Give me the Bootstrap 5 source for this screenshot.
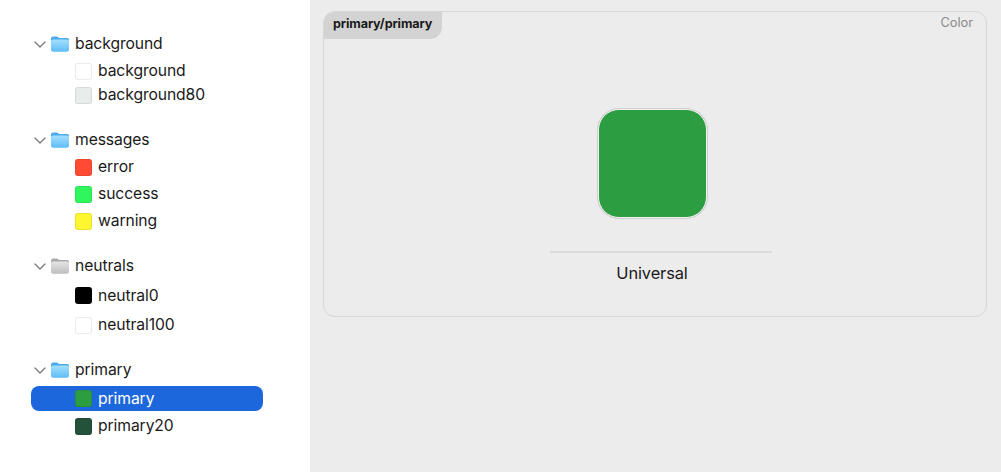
<!DOCTYPE html>
<html lang="en">
<head>
  <meta charset="UTF-8">
  <title>Colors</title>
  <link href="https://cdn.jsdelivr.net/npm/bootstrap@5.3.0/dist/css/bootstrap.min.css" rel="stylesheet">
  <style>
    html, body {
      height: 100%;
      overflow: hidden;
    }
    body {
      font-family: "Inter", "Liberation Sans", sans-serif;
      color: #1a1a1a;
      background-color: #fff;
    }
    /* sidebar */
    .side-pane {
      width: 310px;
      padding: 32px 47px 0 31px;
    }
    .tree-group {
      display: flex;
      flex-direction: column;
      margin-bottom: 21px;
    }
    .tree-group.tight { gap: 3px; }
    .tree-group.wide { gap: 5.5px; }
    .tree-row {
      display: flex;
      align-items: center;
      height: 24px;
      font-size: 15.7px;
      letter-spacing: -0.1px;
      white-space: nowrap;
    }
    .head-row { padding-left: 2px; }
    .head-row .chev { margin-right: 4px; }
    .head-row .folder { margin-right: 6px; }
    .leaf-row { padding-left: 44px; }
    .leaf-row.after-head { margin-top: 3px; }
    .leaf-row.selected {
      height: 25px;
      margin-top: 4px;
      background-color: #1d67dd;
      color: #fff;
      border-radius: 8px;
    }
    .leaf-row.after-selected { margin-top: 3px; }
    .swatch {
      width: 17px;
      height: 17px;
      border-radius: 3px;
      margin-right: 6px;
      border: 1px solid rgba(0, 0, 0, 0.08);
      flex: none;
    }
    /* main */
    .main-pane {
      background-color: #ececec;
      padding: 11px 14px 0 13px;
    }
    .color-card {
      height: 306px;
      border: 1px solid #d6d6d6;
      border-radius: 12px;
      overflow: hidden;
    }
    .name-tab {
      width: 118px;
      height: 27px;
      padding-left: 9px;
      background-color: #d3d3d3;
      border-bottom-right-radius: 12px;
      font-size: 12.6px;
      font-weight: 700;
      line-height: 23px;
      letter-spacing: -0.1px;
      white-space: nowrap;
    }
    .kind-label {
      font-size: 12.8px;
      color: #8a8a8a;
      padding: 3px 13px 0 0;
      line-height: 16px;
    }
    .big-area {
      padding-right: 6px;
    }
    .big-swatch {
      width: 109px;
      height: 109px;
      margin-top: 70px;
      background-color: #2c9d40;
      border: 1px solid #f2f2f2;
      border-radius: 21px;
      box-shadow: 0 0 0 1px #cfcfcf;
    }
    .mode-box {
      width: 222px;
      margin-top: 33px;
      margin-left: 17px;
      padding: 10px 17px 0 0;
      border-top: 2px solid #dadada;
      font-size: 16.4px;
      line-height: 21px;
      letter-spacing: -0.1px;
      text-align: center;
    }
  </style>
</head>
<body>
  <svg width="0" height="0" class="position-absolute">
    <defs>
      <linearGradient id="blue-front" x1="0" y1="0" x2="0" y2="1">
        <stop offset="0" stop-color="#a4e0fd"/>
        <stop offset="1" stop-color="#5ebcf6"/>
      </linearGradient>
      <linearGradient id="gray-front" x1="0" y1="0" x2="0" y2="1">
        <stop offset="0" stop-color="#e6e6e6"/>
        <stop offset="1" stop-color="#bdbdbd"/>
      </linearGradient>
      <symbol id="chevron" viewBox="0 0 14 9">
        <path d="M2 2 7 7l5-5" fill="none" stroke="#777" stroke-width="1.3" stroke-linecap="round" stroke-linejoin="round"/>
      </symbol>
      <symbol id="folder-blue" viewBox="0 0 18 16">
        <path d="M0 3C0 1.500.8.600 2.200.600h3.600c1 0 1.400.9 2.200 1.400h7.800C17.200 2 18 2.900 18 4.200V5H0z" fill="#4aa9ec"/>
        <rect x="0" y="3.400" width="18" height="12.400" rx="2.200" fill="url(#blue-front)"/>
      </symbol>
      <symbol id="folder-gray" viewBox="0 0 18 16">
        <path d="M0 3C0 1.500.8.600 2.200.600h3.600c1 0 1.400.9 2.200 1.400h7.800C17.200 2 18 2.900 18 4.200V5H0z" fill="#a9a9a9"/>
        <rect x="0" y="3.400" width="18" height="12.400" rx="2.200" fill="url(#gray-front)"/>
      </symbol>
    </defs>
  </svg>

  <div class="d-flex h-100">
    <div class="side-pane flex-shrink-0">
      <div class="tree-group">
        <div class="tree-row head-row">
          <svg class="chev" width="14" height="9"><use href="#chevron"/></svg>
          <svg class="folder" width="18" height="16"><use href="#folder-blue"/></svg>
          background
        </div>
        <div class="tree-row leaf-row after-head"><span class="swatch bg-white"></span>background</div>
        <div class="tree-row leaf-row"><span class="swatch" style="background-color:#e8ecea"></span>background80</div>
      </div>

      <div class="tree-group tight">
        <div class="tree-row head-row">
          <svg class="chev" width="14" height="9"><use href="#chevron"/></svg>
          <svg class="folder" width="18" height="16"><use href="#folder-blue"/></svg>
          messages
        </div>
        <div class="tree-row leaf-row"><span class="swatch" style="background-color:#ff4b33"></span>error</div>
        <div class="tree-row leaf-row"><span class="swatch" style="background-color:#2ef65c"></span>success</div>
        <div class="tree-row leaf-row"><span class="swatch" style="background-color:#fdf631"></span>warning</div>
      </div>

      <div class="tree-group wide">
        <div class="tree-row head-row">
          <svg class="chev" width="14" height="9"><use href="#chevron"/></svg>
          <svg class="folder" width="18" height="16"><use href="#folder-gray"/></svg>
          neutrals
        </div>
        <div class="tree-row leaf-row"><span class="swatch" style="background-color:#000"></span>neutral0</div>
        <div class="tree-row leaf-row"><span class="swatch bg-white"></span>neutral100</div>
      </div>

      <div class="tree-group">
        <div class="tree-row head-row">
          <svg class="chev" width="14" height="9"><use href="#chevron"/></svg>
          <svg class="folder" width="18" height="16"><use href="#folder-blue"/></svg>
          primary
        </div>
        <div class="tree-row leaf-row selected"><span class="swatch" style="background-color:#2c9d40"></span>primary</div>
        <div class="tree-row leaf-row after-selected"><span class="swatch" style="background-color:#23513a"></span>primary20</div>
      </div>
    </div>

    <div class="main-pane flex-grow-1">
      <div class="color-card">
        <div class="d-flex justify-content-between">
          <div class="name-tab">primary/primary</div>
          <div class="kind-label">Color</div>
        </div>
        <div class="big-area d-flex flex-column align-items-center">
          <div class="big-swatch"></div>
          <div class="mode-box">Universal</div>
        </div>
      </div>
    </div>
  </div>
</body>
</html>
